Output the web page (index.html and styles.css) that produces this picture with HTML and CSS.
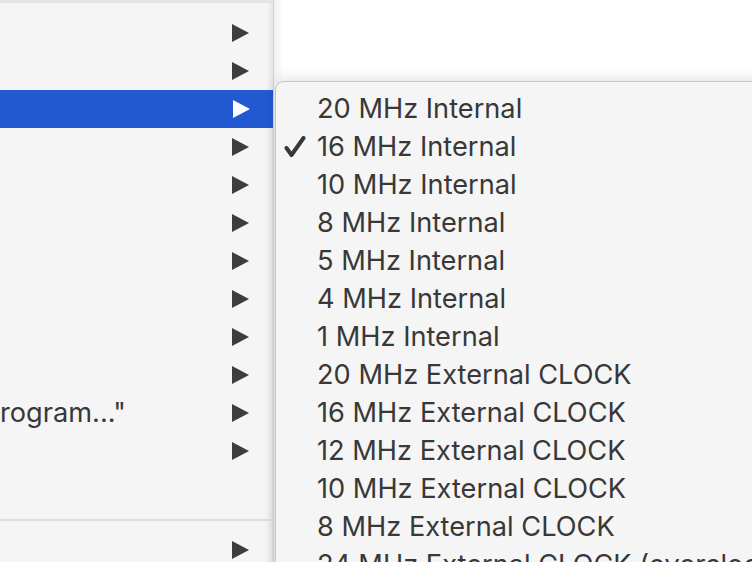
FILE: index.html
```html
<!DOCTYPE html>
<html>
<head>
<meta charset="utf-8">
<link rel="stylesheet" href="styles.css">
</head>
<body>
<div class="screen">
  <div class="menu">
    <div class="topband"></div>
    <ul class="items">
      <li class="row"><span class="label"></span><span class="arrow"></span></li>
      <li class="row"><span class="label"></span><span class="arrow"></span></li>
      <li class="row active"><span class="label"></span><span class="arrow"></span></li>
      <li class="row"><span class="label"></span><span class="arrow"></span></li>
      <li class="row"><span class="label"></span><span class="arrow"></span></li>
      <li class="row"><span class="label"></span><span class="arrow"></span></li>
      <li class="row"><span class="label"></span><span class="arrow"></span></li>
      <li class="row"><span class="label"></span><span class="arrow"></span></li>
      <li class="row"><span class="label"></span><span class="arrow"></span></li>
      <li class="row"><span class="label"></span><span class="arrow"></span></li>
      <li class="row"><span class="label">rogram..."</span><span class="arrow"></span></li>
      <li class="row"><span class="label"></span><span class="arrow"></span></li>
    </ul>
    <div class="sep"></div>
    <ul class="items">
      <li class="row"><span class="label"></span><span class="arrow"></span></li>
    </ul>
  </div>
  <div class="side">
    <div class="submenu">
      <ul class="subitems">
        <li class="sub"><span class="check"></span><span class="text">20 MHz Internal</span></li>
        <li class="sub"><span class="check"><svg width="22" height="22" viewBox="0 0 22 22"><path d="M2.5 12 L7.5 19 L19.5 2" fill="none" stroke="#383838" stroke-width="4" stroke-linecap="round" stroke-linejoin="round"/></svg></span><span class="text">16 MHz Internal</span></li>
        <li class="sub"><span class="check"></span><span class="text">10 MHz Internal</span></li>
        <li class="sub"><span class="check"></span><span class="text">8 MHz Internal</span></li>
        <li class="sub"><span class="check"></span><span class="text">5 MHz Internal</span></li>
        <li class="sub"><span class="check"></span><span class="text">4 MHz Internal</span></li>
        <li class="sub"><span class="check"></span><span class="text">1 MHz Internal</span></li>
        <li class="sub"><span class="check"></span><span class="text">20 MHz External CLOCK</span></li>
        <li class="sub"><span class="check"></span><span class="text">16 MHz External CLOCK</span></li>
        <li class="sub"><span class="check"></span><span class="text">12 MHz External CLOCK</span></li>
        <li class="sub"><span class="check"></span><span class="text">10 MHz External CLOCK</span></li>
        <li class="sub"><span class="check"></span><span class="text">8 MHz External CLOCK</span></li>
        <li class="sub"><span class="check"></span><span class="text">24 MHz External CLOCK (overclocked)</span></li>
      </ul>
    </div>
  </div>
</div>
</body>
</html>
```
FILE: styles.css
```css
html, body {
  margin: 0;
  padding: 0;
  width: 752px;
  height: 562px;
  overflow: hidden;
  background: #ffffff;
}

.screen {
  display: flex;
  width: 752px;
  height: 562px;
  overflow: hidden;
  font-family: Inter, "Noto Sans", "Liberation Sans", sans-serif;
  font-size: 27.2px;
  color: #383838;
}

.menu {
  flex: 0 0 274px;
  width: 274px;
  height: 562px;
  background: #f5f5f5;
  box-shadow: inset -6px 0 6px -5px rgba(0,0,0,0.12);
  border-right: 1px solid #d4d4d4;
  box-sizing: border-box;
  overflow: hidden;
  position: relative;
}

.topband {
  height: 3px;
  background: #e4e4e4;
  margin-bottom: 11px;
}

.items {
  list-style: none;
  margin: 0;
  padding: 0;
}

.row {
  height: 38px;
  display: flex;
  align-items: center;
  justify-content: space-between;
  padding-right: 24px;
}

.row.active {
  background: #2259d1;
  margin-right: -1px;
}

.label {
  white-space: nowrap;
  line-height: 38px;
}

.arrow {
  width: 0;
  height: 0;
  border-top: 9.5px solid transparent;
  border-bottom: 9.5px solid transparent;
  border-left: 17px solid #3d3d3d;
}

.row.active .arrow {
  border-left-color: #ffffff;
}

.sep {
  height: 2px;
  background: #dedede;
  margin: 49px 0 10px;
}

.side {
  flex: 1 1 auto;
  padding-top: 81px;
  padding-left: 1px;
  background: linear-gradient(to right, #f0f0f0 0, #ffffff 10px);
  position: relative;
}

.submenu {
  background: #f5f5f5;
  border-top: 1px solid #c6c6c6;
  border-left: 1px solid #c6c6c6;
  border-top-left-radius: 9px;
  box-shadow: 0 -2px 14px rgba(0,0,0,0.12);
  padding-top: 8px;
  width: 600px;
  height: 600px;
}

.subitems {
  list-style: none;
  margin: 0;
  padding: 0;
}

.sub {
  height: 38px;
  display: flex;
  align-items: center;
  white-space: nowrap;
}

.check {
  flex: 0 0 41px;
  width: 41px;
  height: 22px;
  display: flex;
  align-items: center;
  justify-content: flex-start;
  padding-left: 8px;
  box-sizing: border-box;
}

.text {
  line-height: 38px;
}
```
